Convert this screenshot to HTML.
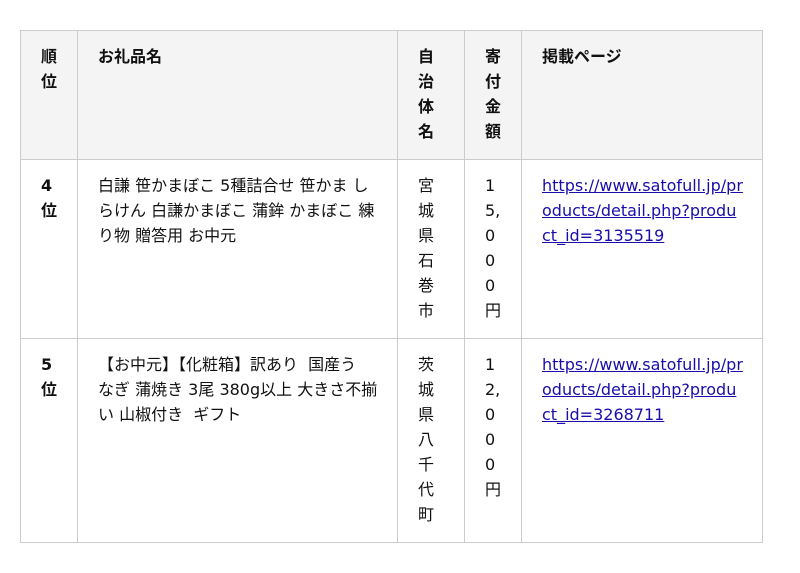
<!DOCTYPE html>
<html><head><meta charset="utf-8"><style>
body{margin:0;background:#fff;font-family:"DejaVu Sans","Noto Sans CJK JP",sans-serif;font-size:16px;color:#111;}
table{position:absolute;left:20px;top:30px;border-collapse:collapse;table-layout:fixed;width:742px;}
td,th{border:1px solid #ccc;vertical-align:top;padding:13px 20px 0 20px;line-height:25px;text-align:left;word-break:break-all;white-space:nowrap;}
th{background:#f4f4f4;font-weight:bold;}
td.b{font-weight:bold;}
a{color:#1a0dab;text-decoration:underline;}
</style></head><body>
<table>
<colgroup><col style="width:57px"><col style="width:320px"><col style="width:67px"><col style="width:57px"><col style="width:241px"></colgroup>
<tr style="height:129px"><th>順<br>位</th><th>お礼品名</th><th>自<br>治<br>体<br>名</th><th>寄<br>付<br>金<br>額</th><th>掲載ページ</th></tr>
<tr style="height:179px"><td class="b">4<br>位</td><td>白謙 笹かまぼこ 5種詰合せ 笹かま し<br>らけん 白謙かまぼこ 蒲鉾 かまぼこ 練<br>り物 贈答用 お中元</td><td>宮<br>城<br>県<br>石<br>巻<br>市</td><td>1<br>5,<br>0<br>0<br>0<br>円</td><td><a>https://www.satofull.jp/pr<br>oducts/detail.php?produ<br>ct_id=3135519</a></td></tr>
<tr style="height:204px"><td class="b">5<br>位</td><td>【お中元】【化粧箱】訳あり&nbsp; 国産う<br>なぎ 蒲焼き 3尾 380g以上 大きさ不揃<br>い 山椒付き&nbsp; ギフト</td><td>茨<br>城<br>県<br>八<br>千<br>代<br>町</td><td>1<br>2,<br>0<br>0<br>0<br>円</td><td><a>https://www.satofull.jp/pr<br>oducts/detail.php?produ<br>ct_id=3268711</a></td></tr>
</table>
</body></html>
